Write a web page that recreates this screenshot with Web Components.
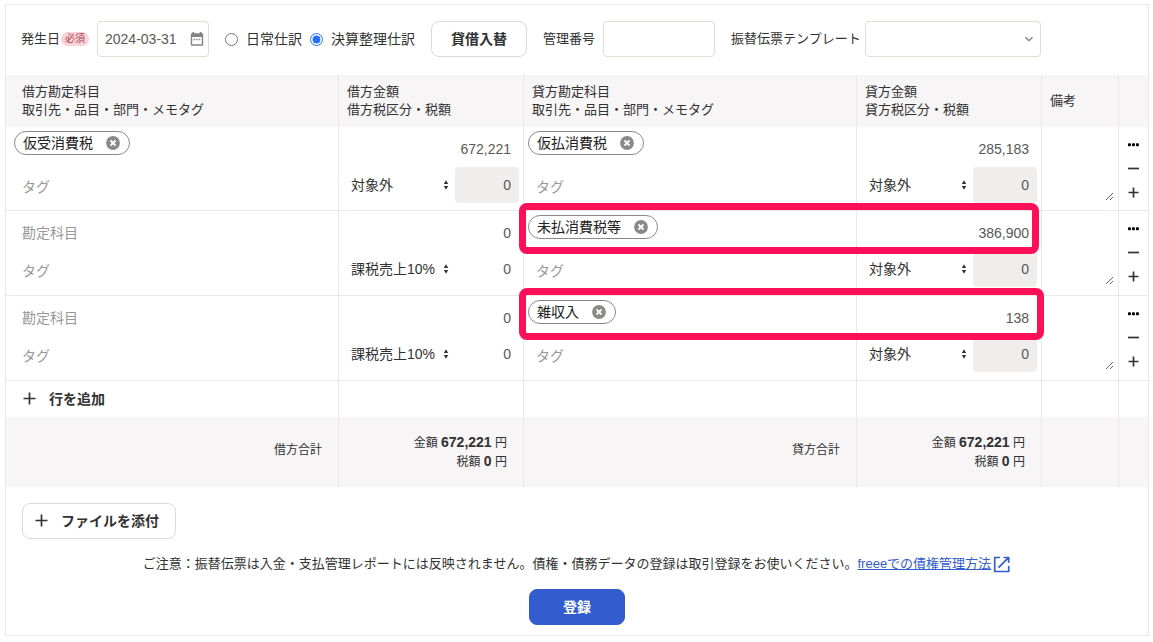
<!DOCTYPE html>
<html lang="ja">
<head>
<meta charset="utf-8">
<meta name="viewport" content="width=device-width, initial-scale=1">
<title>振替伝票</title>
<style>
  :root {
    --text: #323232;
    --sub: #595757;
    --muted: #9a9797;
    --line: #e9e7e7;
    --field-line: #e1ddd5;
    --shade: #f7f5f6;
    --primary: #335cce;
  }
  body {
    margin: 4px 4px 6px 5px;
    background: #fff;
    color: var(--text);
    font: 13px/18px "Liberation Sans", "Noto Sans CJK JP", sans-serif;
  }
</style>
</head>
<body>
<journal-card>
  <journal-toolbar slot="toolbar"></journal-toolbar>
  <journal-table></journal-table>
  <journal-footer slot="footer"></journal-footer>
</journal-card>

<script>
const RESET = `
  *, *::before, *::after { box-sizing: border-box; }
  input, select, button, textarea {
    font: inherit; color: inherit; margin: 0; border: 0; padding: 0; background: none; border-radius: 0;
  }
  button, select { cursor: pointer; }
  svg { display: block; flex: none; }
`;

class Base extends HTMLElement {
  connectedCallback() {
    if (this.shadowRoot) return;
    this.attachShadow({ mode: 'open' }).innerHTML =
      `<style>${RESET}${this.styles()}</style>${this.markup()}`;
  }
  attr(name) { return this.getAttribute(name) || ''; }
}

const PLUS = `<svg width="14" height="14" viewBox="0 0 14 14" aria-hidden="true"><path d="M6.500 .500v12M.500 6.500h12" stroke="currentColor" stroke-width="1.700" fill="none"/></svg>`;

customElements.define('journal-card', class extends Base {
  styles() { return `
    :host { display: block; background: #fff; border: 1px solid var(--line); box-shadow: 0 0 6px rgba(0,0,0,.07); }
  `; }
  markup() { return `<slot name="toolbar"></slot><slot></slot><slot name="footer"></slot>`; }
});

customElements.define('ui-button', class extends Base {
  styles() { return `
    :host { display: inline-block; }
    button {
      display: flex; align-items: center; justify-content: center; gap: 12px;
      height: 36px; min-width: 96px; padding: 0 16px;
      border: 1px solid #dcdada; border-radius: 8px; background: #fff;
      font-size: 14px; font-weight: 700; white-space: nowrap;
    }
    :host([icon]) button { padding-left: 12px; }
    :host([kind="ghost"]) button { border-color: transparent; background: none; }
    :host([kind="primary"]) button { border-color: var(--primary); background: var(--primary); color: #fff; }
  `; }
  markup() { return `<button type="button">${this.hasAttribute('icon') ? PLUS : ''}<slot></slot></button>`; }
});

customElements.define('journal-toolbar', class extends Base {
  styles() { return `
    :host { display: block; padding: 16px 15px 18px; }
    form { display: flex; flex-wrap: wrap; align-items: center; gap: 8px 16px; }
    .field, .radio { display: flex; align-items: center; gap: 8px; white-space: nowrap; }
    .radios { display: flex; align-items: center; gap: 8px; }
    .field.tight { gap: 4px; }
    .name { display: flex; align-items: center; gap: 1px; }
    .badge { padding: 0 4px; border-radius: 7px; background: #f9d3d9; color: #a8474f; font-size: 10px; line-height: 14px; }
    .box { display: flex; align-items: center; border: 1px solid var(--field-line); border-radius: 4px; height: 36px; width: 112px; background: #fff; color: var(--sub); font-size: 14px; }
    .box input { flex: 1; min-width: 0; height: 34px; padding: 0 7px; }
    .box button { padding-right: 4px; color: #858282; }
    .radio { font-size: 14px; }
    .radio input { width: 13px; height: 13px; accent-color: #2870ff; }
    .select { display: grid; align-items: center; width: 176px; }
    .select select { grid-area: 1/1; width: 100%; height: 34px; padding: 0 24px 0 8px; appearance: none; }
    .select svg { grid-area: 1/1; justify-self: end; margin-right: 6px; pointer-events: none; color: #8c8989; }
  `; }
  markup() { return `
    <form>
      <div class="field">
        <label class="name" for="date">発生日<span class="badge">必須</span></label>
        <span class="box">
          <input id="date" type="text" value="2024-03-31">
          <button type="button" aria-label="カレンダー">
            <svg width="14" height="14" viewBox="0 0 14 14"><path fill="currentColor" fill-rule="evenodd" d="M2.500 0h1.700v1.300h5.600V0h1.700v1.300h.500A1.200 1.200 0 0 1 13.200 2.500v10a1.200 1.200 0 0 1-1.200 1.200H2a1.200 1.200 0 0 1-1.200-1.200v-10A1.200 1.200 0 0 1 2 1.300h.500zM2.200 5v7.300h9.600V5zM3.600 6.700h1.500v1.500H3.600zM6.200 6.700h1.500v1.500H6.200zM8.800 6.700h1.500v1.500H8.800z"/></svg>
          </button>
        </span>
      </div>
      <div class="radios" role="radiogroup" aria-label="仕訳の種類">
        <label class="radio"><input type="radio" name="kind">日常仕訳</label>
        <label class="radio"><input type="radio" name="kind" checked>決算整理仕訳</label>
      </div>
      <ui-button>貸借入替</ui-button>
      <div class="field">
        <label for="number">管理番号</label>
        <span class="box"><input id="number" type="text"></span>
      </div>
      <div class="field tight">
        <label for="template">振替伝票テンプレート</label>
        <span class="box select">
          <select id="template"><option></option></select>
          <svg width="10" height="10" viewBox="0 0 10 10"><path d="M1.500 3.200 5 6.700l3.500-3.500" fill="none" stroke="currentColor" stroke-width="1.600"/></svg>
        </span>
      </div>
    </form>`; }
});

customElements.define('account-chip', class extends Base {
  styles() { return `
    :host { display: inline-flex; align-items: center; gap: 12px; height: 24px; padding: 0 8px;
      border: 1px solid #8c8989; border-radius: 12px; background: #fff; color: #222; font-size: 14px; box-sizing: border-box; white-space: nowrap; }
  `; }
  markup() { return `
    <slot></slot>
    <button type="button" aria-label="削除">
      <svg width="16" height="16" viewBox="0 0 16 16"><circle cx="8" cy="8" r="6.900" fill="#8c8989"/><path d="M5.500 5.500l5 5M10.500 5.500l-5 5" stroke="#fff" stroke-width="1.800"/></svg>
    </button>`; }
});

customElements.define('account-field', class extends Base {
  styles() { return `
    :host { display: grid; gap: 2px; padding: 4px; font-size: 14px; }
    :host([lead]) { padding: 4px 8px; }
    .account { display: flex; align-items: flex-start; height: 36px; }
    input { width: 100%; height: 36px; padding: 0 8px; }
    input::placeholder { color: var(--muted); opacity: 1; }
  `; }
  markup() {
    const account = this.attr('account');
    return `
      <div class="account">${account
        ? `<account-chip>${account}</account-chip>`
        : `<input type="text" placeholder="勘定科目" aria-label="勘定科目">`}</div>
      <input type="text" placeholder="タグ" aria-label="タグ">`;
  }
});

customElements.define('amount-field', class extends Base {
  styles() { return `
    :host { display: grid; grid-template-columns: 1fr 64px; padding: 4px; font-size: 14px; }
    input { width: 100%; height: 36px; padding: 0 8px; text-align: right; color: var(--sub); border-radius: 4px; }
    .amount { grid-column: 1 / -1; }
    .tax:disabled { background: #efeeed; }
    .kind { display: grid; align-items: center; }
    select { grid-area: 1/1; width: 100%; height: 36px; padding: 0 16px 0 8px; appearance: none; }
    .kind svg { grid-area: 1/1; justify-self: end; margin-right: 6px; pointer-events: none; }
  `; }
  markup() { return `
    <input class="amount" type="text" value="${this.attr('amount')}" aria-label="金額">
    <span class="kind">
      <select aria-label="税区分"><option>${this.attr('tax-kind')}</option></select>
      <svg width="6" height="10" viewBox="0 0 6 10"><path d="M3 .300 5.200 4H.800zM3 9.700 .800 6h4.400z" fill="currentColor"/></svg>
    </span>
    <input class="tax" type="text" value="0" aria-label="税額" ${this.hasAttribute('tax-locked') ? 'disabled' : ''}>`; }
});

customElements.define('row-actions', class extends Base {
  styles() { return `
    :host { display: grid; justify-content: center; grid-auto-rows: 24px; }
    button { display: grid; place-items: center; width: 24px; }
  `; }
  markup() { return `
    <button type="button" aria-label="メニュー"><svg width="12" height="4" viewBox="0 0 12 4"><rect x="0" y=".300" width="2.900" height="2.900" rx=".800"/><rect x="4" y=".300" width="2.900" height="2.900" rx=".800"/><rect x="8" y=".300" width="2.900" height="2.900" rx=".800"/></svg></button>
    <button type="button" aria-label="行を削除"><svg width="12" height="12" viewBox="0 0 12 12"><path d="M0 5.500h11" stroke="currentColor" stroke-width="1.700"/></svg></button>
    <button type="button" aria-label="行を挿入"><svg width="12" height="12" viewBox="0 0 12 12"><path d="M.500 5.500h10M5.500 .500v10" stroke="currentColor" stroke-width="1.700"/></svg></button>`; }
});

customElements.define('total-amount', class extends Base {
  styles() { return `
    :host { display: block; font-size: 12px; line-height: 19px; }
    div { height: 19px; }
    b { font-size: 14px; }
  `; }
  markup() { return `<div>金額 <b>${this.attr('amount')}</b> 円</div><div>税額 <b>0</b> 円</div>`; }
});

customElements.define('journal-table', class extends Base {
  styles() { return `
    :host { display: block; }
    table { width: 100%; table-layout: fixed; border-collapse: separate; border-spacing: 0; }
    .amount-col { width: 185px; }
    .memo-col { width: 77px; }
    .action-col { width: 29px; }
    th, td { padding: 0; border-right: 1px solid var(--line); text-align: left; vertical-align: top; font-weight: 400; }
    tr > :last-child { border-right: 0; }
    thead th { height: 52px; padding: 0 8px; vertical-align: middle; background: var(--shade); white-space: nowrap; }
    thead th:first-child { padding-left: 16px; }
    tbody td { height: 85px; border-bottom: 1px solid var(--line); position: relative; }
    tbody tr:first-child td { height: 84px; }
    tbody td:last-child { vertical-align: middle; }
    .add td { height: 36px; vertical-align: middle; padding: 0 4px; }
    .add ui-button { display: block; width: max-content; }
    .total > * { height: 70px; padding: 0 16px; background: var(--shade); text-align: right; vertical-align: middle; }
    .total th { padding-bottom: 4px; font-size: 12px; }
    textarea { display: block; width: 68px; height: 70px; margin: 4px; padding: 8px; resize: vertical; }
    .mark { position: absolute; z-index: 1; top: -8px; left: -5px; width: calc(100% + 188px); height: 51px;
      border: 7px solid #ff0f57; border-radius: 8px; pointer-events: none; }
    .mark.wide { width: calc(100% + 193px); height: 52px; }
  `; }
  markup() {
    const rows = [
      { debit: '仮受消費税', debitAmount: '672,221', debitTax: '対象外', locked: true, credit: '仮払消費税', creditAmount: '285,183' },
      { debit: '', debitAmount: '0', debitTax: '課税売上10%', credit: '未払消費税等', creditAmount: '386,900', mark: 'mark' },
      { debit: '', debitAmount: '0', debitTax: '課税売上10%', credit: '雑収入', creditAmount: '138', mark: 'mark wide' },
    ];
    return `
    <table>
      <colgroup><col><col class="amount-col"><col><col class="amount-col"><col class="memo-col"><col class="action-col"></colgroup>
      <thead><tr>
        <th scope="col">借方勘定科目<br>取引先・品目・部門・メモタグ</th>
        <th scope="col">借方金額<br>借方税区分・税額</th>
        <th scope="col">貸方勘定科目<br>取引先・品目・部門・メモタグ</th>
        <th scope="col">貸方金額<br>貸方税区分・税額</th>
        <th scope="col">備考</th>
        <th></th>
      </tr></thead>
      <tbody>${rows.map(r => `<tr>
        <td><account-field lead account="${r.debit}"></account-field></td>
        <td><amount-field amount="${r.debitAmount}" tax-kind="${r.debitTax}" ${r.locked ? 'tax-locked' : ''}></amount-field></td>
        <td><account-field account="${r.credit}"></account-field>${r.mark ? `<div class="${r.mark}"></div>` : ''}</td>
        <td><amount-field amount="${r.creditAmount}" tax-kind="対象外" tax-locked></amount-field></td>
        <td><textarea aria-label="備考"></textarea></td>
        <td><row-actions></row-actions></td>
      </tr>`).join('')}</tbody>
      <tfoot>
        <tr class="add"><td><ui-button icon kind="ghost">行を追加</ui-button></td><td></td><td></td><td></td><td></td><td></td></tr>
        <tr class="total">
          <th scope="row">借方合計</th><td><total-amount amount="672,221"></total-amount></td>
          <th scope="row">貸方合計</th><td><total-amount amount="672,221"></total-amount></td>
          <td></td><td></td>
        </tr>
      </tfoot>
    </table>`;
  }
});

customElements.define('journal-footer', class extends Base {
  styles() { return `
    :host { display: grid; gap: 16px; padding: 16px 16px 10px; justify-items: center; }
    .attach { justify-self: start; }
    ui-button { display: block; }
    p { display: flex; margin: 0; }
    a { display: flex; align-items: center; gap: 2px; color: var(--primary); text-decoration: underline; }
  `; }
  markup() { return `
    <ui-button class="attach" icon>ファイルを添付</ui-button>
    <p>ご注意：振替伝票は入金・支払管理レポートには反映されません。債権・債務データの登録は取引登録をお使いください。<a href="#">freeeでの債権管理方法<svg width="18" height="18" viewBox="0 0 18 18" aria-hidden="true"><path d="M7 2.500H1.700v14h14V11M10.500 2.500h5.200v5.200M15.500 2.700 5.500 12.700" fill="none" stroke="currentColor" stroke-width="1.700" stroke-linejoin="round"/></svg></a></p>
    <ui-button kind="primary">登録</ui-button>`; }
});
</script>
</body>
</html>
